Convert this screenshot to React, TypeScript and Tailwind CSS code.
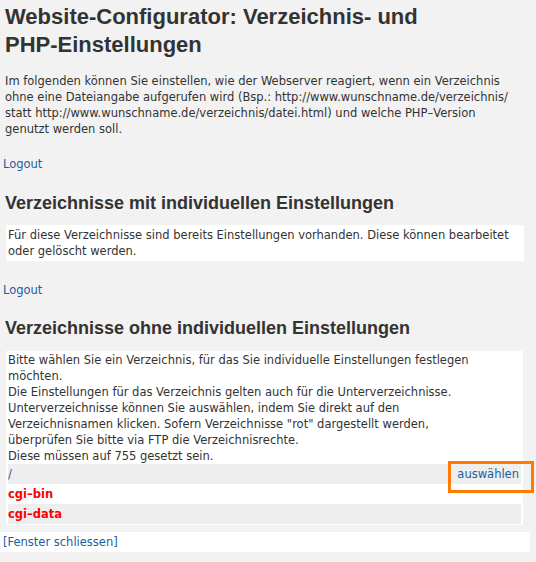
export default function App() {
  const body = { fontFamily: '"DejaVu Sans", Verdana, sans-serif' };
  const head = { fontFamily: '"Liberation Sans", Arial, sans-serif' };
  return (
    <div className="min-h-[562px] w-[536px] bg-[#f2f2f2] text-[#333] text-[11.5px] leading-[16px]" style={body}>
      <h1 className="px-[5px] pt-[3px] text-[22px] leading-[28px] font-bold text-[#333]" style={head}>
        Website-Configurator: Verzeichnis- und <span className="whitespace-nowrap">PHP-Einstellungen</span>
      </h1>
      <p className="mt-[14px] pl-[5px] pr-[24px]">
        Im folgenden können Sie einstellen, wie der Webserver reagiert, wenn ein Verzeichnis ohne eine Dateiangabe aufgerufen wird (Bsp.: http://www.wunschname.de/verzeichnis/ statt http://www.wunschname.de/verzeichnis/datei.html) und welche PHP–Version genutzt werden soll.
      </p>
      <a className="mt-[19px] block px-[3px] text-[#1b5e9e]">Logout</a>

      <h2 className="mt-[20px] px-[5px] text-[18px] leading-[22px] font-bold" style={head}>
        Verzeichnisse mit individuellen Einstellungen
      </h2>
      <div className="mx-[6px] mt-[11px] w-[518px] bg-white px-[2px] py-[2px]">
        Für diese Verzeichnisse sind bereits Einstellungen vorhanden. Diese können bearbeitet oder gelöscht werden.
      </div>
      <a className="mt-[21px] block px-[3px] text-[#1b5e9e]">Logout</a>

      <h2 className="mt-[19px] px-[5px] text-[18px] leading-[22px] font-bold" style={head}>
        Verzeichnisse ohne individuellen Einstellungen
      </h2>
      <div className="mx-[6px] mt-[12px] w-[517px] bg-white px-[2px] pt-[1px] pb-[1px]">
        <p className="pr-[30px]">
          Bitte wählen Sie ein Verzeichnis, für das Sie individuelle Einstellungen festlegen möchten.
          <br />
          Die Einstellungen für das Verzeichnis gelten auch für die Unterverzeichnisse. Unterverzeichnisse können Sie auswählen, indem Sie direkt auf den Verzeichnisnamen klicken. Sofern Verzeichnisse "rot" dargestellt werden, überprüfen Sie bitte via FTP die Verzeichnisrechte.
          <br />
          Diese müssen auf 755 gesetzt sein.
        </p>
        <div className="relative flex h-[20px] items-center justify-between bg-[#eeeeee] pr-[2px]">
          <a className="text-[#1b5e9e]">/</a>
          <a className="text-[#1b5e9e]">auswählen</a>
          <span className="absolute right-[-13px] top-[-3px] h-[32px] w-[86px] border-[3px] border-[#ff7a00]" />
        </div>
        <div className="flex h-[20px] items-center font-bold text-[#ff0000]">cgi–bin</div>
        <div className="flex h-[20px] items-center bg-[#eeeeee] font-bold text-[#ff0000]">cgi–data</div>
      </div>
      <div className="mt-[7px] w-[530px] bg-white px-[3px] py-[2px]">
        <a className="text-[#1b5e9e]">[Fenster schliessen]</a>
      </div>
    </div>
  );
}
